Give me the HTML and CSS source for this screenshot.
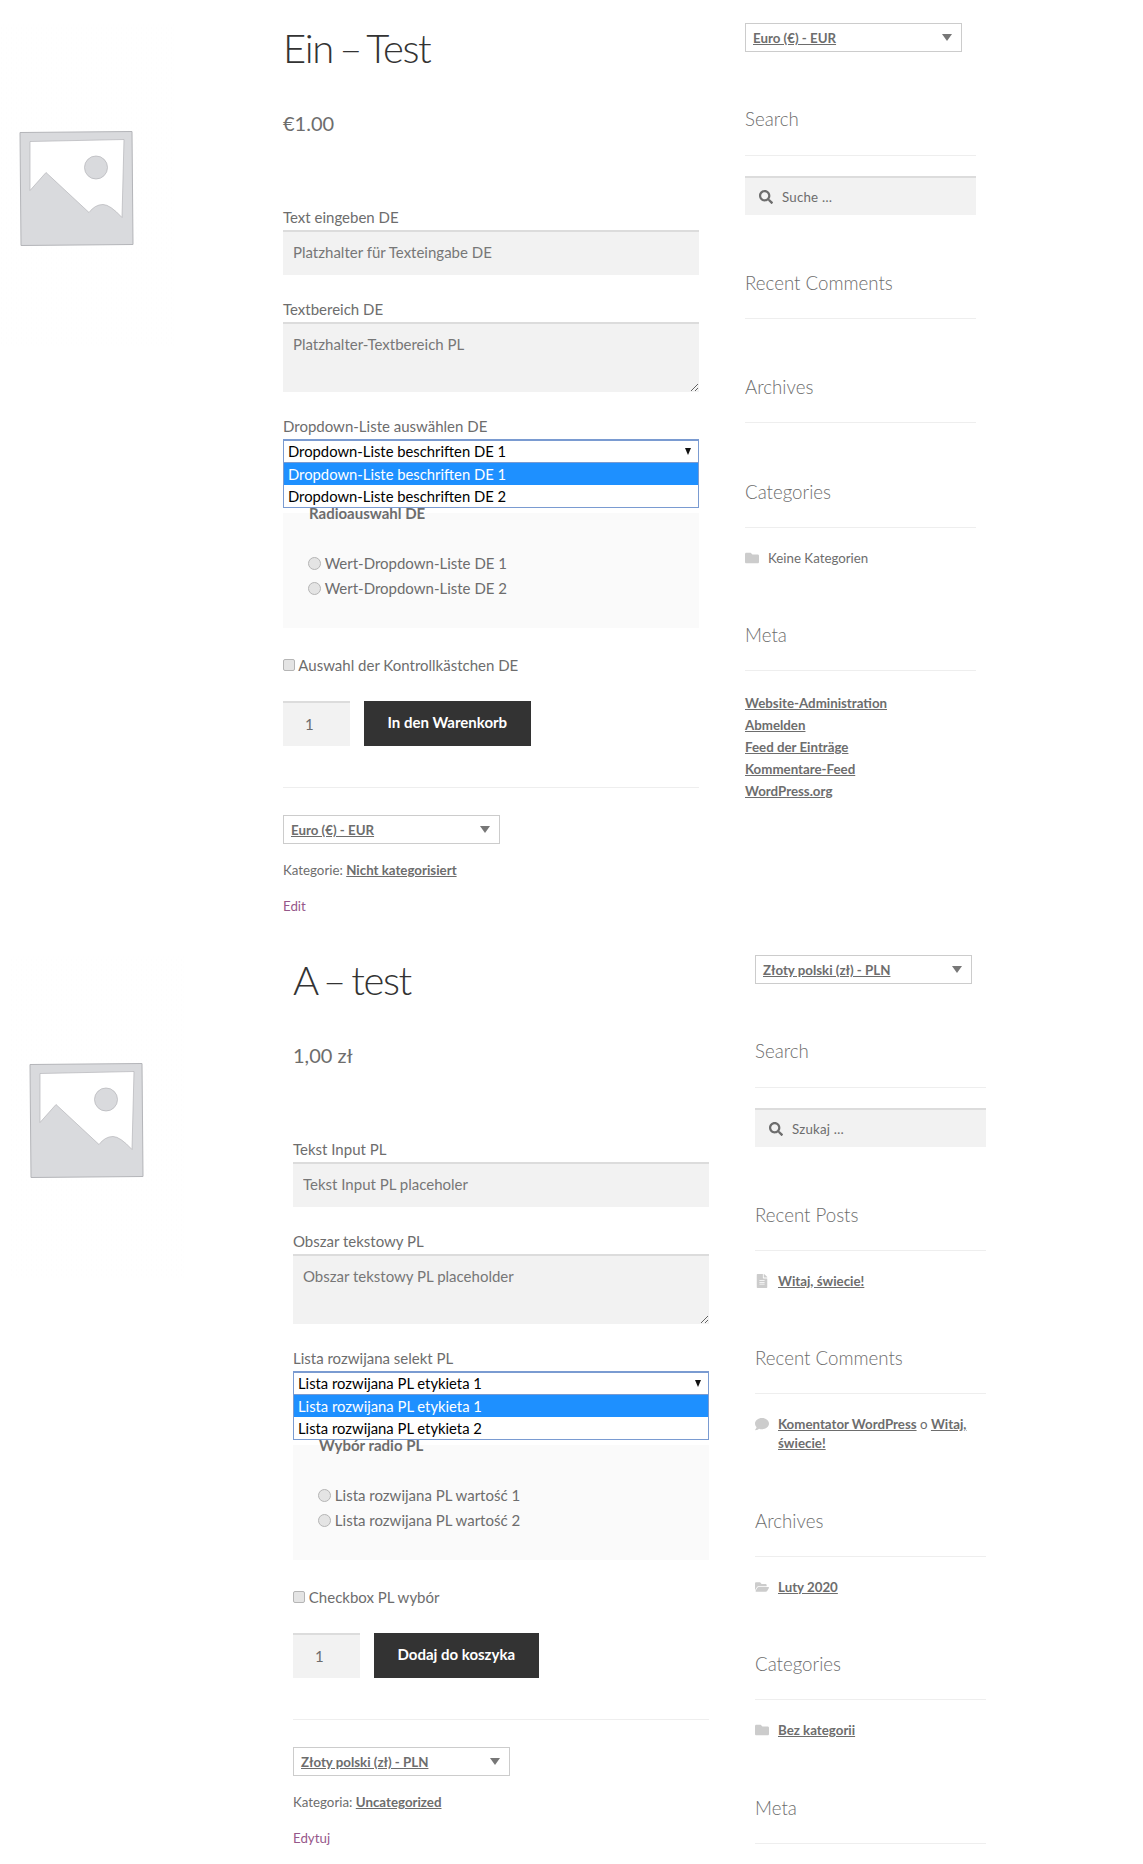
FILE: index.html
```html
<!DOCTYPE html>
<html lang="en">
<head>
    <meta charset="UTF-8">
    <title>Produkt</title>
    <link rel="stylesheet" href="styles.css">
</head>
<body>
    <svg class="sprite" aria-hidden="true">
        <defs>
            <pattern id="dots" width="5" height="5" patternUnits="userSpaceOnUse">
                <rect x="1" y="2" width="1" height="1" fill="#fafafa"/>
                <rect x="3" y="4" width="1" height="1" fill="#fcfcfc"/>
            </pattern>
        </defs>
        <symbol id="ph" viewBox="0 0 175 345">
            <rect x="0" y="24" width="175" height="322" fill="url(#dots)"/>
            <path d="M20 132 L132 131 L133 244 L21 245 Z" fill="#d9dadd" stroke="#b4b5b9"/>
            <path d="M30 141 L124 139 L122 217 Q110 204 103 204 Q95 204 89 212 L46 172 L30 190 Z" fill="#fff" stroke="#b4b5b9" stroke-width="0.7"/>
            <circle cx="96" cy="167" r="11.5" fill="#d9dadd" stroke="#b4b5b9" stroke-width="0.7"/>
        </symbol>
        <symbol id="i-search" viewBox="0 0 512 512"><path d="M505 442.7L405.3 343c-4.5-4.5-10.6-7-17-7H372c27.6-35.3 44-79.7 44-128C416 93.1 322.9 0 208 0S0 93.1 0 208s93.1 208 208 208c48.3 0 92.7-16.4 128-44v16.3c0 6.4 2.5 12.5 7 17l99.7 99.7c9.4 9.4 24.6 9.4 33.9 0l28.3-28.3c9.4-9.4 9.4-24.6.1-34zM208 336c-70.7 0-128-57.2-128-128 0-70.7 57.2-128 128-128 70.7 0 128 57.2 128 128 0 70.7-57.2 128-128 128z"/></symbol>
        <symbol id="i-folder" viewBox="0 0 512 512"><path d="M464 128H272l-64-64H48C21.49 64 0 85.49 0 112v288c0 26.51 21.49 48 48 48h416c26.51 0 48-21.49 48-48V176c0-26.51-21.49-48-48-48z"/></symbol>
        <symbol id="i-open" viewBox="0 0 576 512"><path d="M572.694 292.093L500.27 416.248A63.997 63.997 0 0 1 444.989 448H45.025c-18.523 0-30.064-20.093-20.731-36.093l72.424-124.155A64 64 0 0 1 152 256h399.964c18.523 0 30.064 20.093 20.73 36.093zM152 224h328v-48c0-26.51-21.49-48-48-48H272l-64-64H48C21.49 64 0 85.49 0 112v278.046l69.077-118.418C86.214 242.25 117.989 224 152 224z"/></symbol>
        <symbol id="i-file" viewBox="0 0 384 512"><path d="M224 136V0H24C10.7 0 0 10.7 0 24v464c0 13.3 10.7 24 24 24h336c13.3 0 24-10.7 24-24V160H248c-13.2 0-24-10.8-24-24zm64 236c0 6.6-5.4 12-12 12H108c-6.6 0-12-5.4-12-12v-8c0-6.6 5.4-12 12-12h168c6.6 0 12 5.4 12 12v8zm0-64c0 6.6-5.4 12-12 12H108c-6.6 0-12-5.4-12-12v-8c0-6.6 5.4-12 12-12h168c6.6 0 12 5.4 12 12v8zm0-72v8c0 6.6-5.4 12-12 12H108c-6.6 0-12-5.4-12-12v-8c0-6.6 5.4-12 12-12h168c6.6 0 12 5.4 12 12zm96-114.1v6.1H256V0h6.1c6.4 0 12.5 2.5 17 7l97.9 98c4.5 4.5 7 10.6 7 16.9z"/></symbol>
        <symbol id="i-comment" viewBox="0 0 512 512"><path d="M256 32C114.6 32 0 125.1 0 240c0 49.6 21.4 95 57 130.7C44.5 421.1 2.7 466 2.2 466.5c-2.2 2.3-2.8 5.7-1.5 8.7S4.8 480 8 480c66.3 0 116-31.8 140.6-51.4 32.7 12.3 69 19.4 107.4 19.4 141.4 0 256-93.1 256-208S397.4 32 256 32z"/></symbol>
    </svg>

    <div class="product">
        <svg class="placeholder"><use href="#ph"/></svg>
        <div class="summary">
            <h1 class="product-title">Ein – Test</h1>
            <p class="price">€1.00</p>
            <label class="field-label first">Text eingeben DE</label>
            <input class="text-input" type="text" placeholder="Platzhalter für Texteingabe DE">
            <label class="field-label">Textbereich DE</label>
            <textarea class="text-area" placeholder="Platzhalter-Textbereich PL"></textarea>
            <label class="field-label">Dropdown-Liste auswählen DE</label>
            <div class="open-select">
                <div class="open-select-value"><span>Dropdown-Liste beschriften DE 1</span><i class="mini-arrow"></i></div>
                <div class="open-select-list">
                    <div class="option selected">Dropdown-Liste beschriften DE 1</div>
                    <div class="option">Dropdown-Liste beschriften DE 2</div>
                </div>
            </div>
            <fieldset class="radio-group">
                <legend>Radioauswahl DE</legend>
                <label class="radio-row"><input type="radio" name="r1"> Wert-Dropdown-Liste DE 1</label>
                <label class="radio-row"><input type="radio" name="r1"> Wert-Dropdown-Liste DE 2</label>
            </fieldset>
            <label class="check-row"><input type="checkbox"> Auswahl der Kontrollkästchen DE</label>
            <div class="cart-row">
                <div class="qty">1</div>
                <div class="cart-button">In den Warenkorb</div>
            </div>
            <div class="currency"><a href="#">Euro (€) - EUR</a><i class="arrow"></i></div>
            <p class="meta">Kategorie: <a href="#">Nicht kategorisiert</a></p>
            <p class="edit"><a href="#">Edit</a></p>
        </div>
        <div class="sidebar">
            <div class="currency top"><a href="#">Euro (€) - EUR</a><i class="arrow"></i></div>
            <div class="widget first">
                <h2 class="widget-title">Search</h2>
                <div class="search-box"><svg class="search-icon"><use href="#i-search"/></svg>Suche …</div>
            </div>
            <div class="widget"><h2 class="widget-title">Recent Comments</h2></div>
            <div class="widget"><h2 class="widget-title">Archives</h2></div>
            <div class="widget">
                <h2 class="widget-title">Categories</h2>
                <ul class="widget-list">
                    <li><svg class="list-icon"><use href="#i-folder"/></svg><span>Keine Kategorien</span></li>
                </ul>
            </div>
            <div class="widget">
                <h2 class="widget-title">Meta</h2>
                <ul class="widget-list links">
                    <li><a href="#">Website-Administration</a></li>
                    <li><a href="#">Abmelden</a></li>
                    <li><a href="#">Feed der Einträge</a></li>
                    <li><a href="#">Kommentare-Feed</a></li>
                    <li><a href="#">WordPress.org</a></li>
                </ul>
            </div>
        </div>
    </div>

    <div class="product second">
        <svg class="placeholder"><use href="#ph"/></svg>
        <div class="summary">
            <h1 class="product-title">A – test</h1>
            <p class="price">1,00 zł</p>
            <label class="field-label first">Tekst Input PL</label>
            <input class="text-input" type="text" placeholder="Tekst Input PL placeholer">
            <label class="field-label">Obszar tekstowy PL</label>
            <textarea class="text-area" placeholder="Obszar tekstowy PL placeholder"></textarea>
            <label class="field-label">Lista rozwijana selekt PL</label>
            <div class="open-select">
                <div class="open-select-value"><span>Lista rozwijana PL etykieta 1</span><i class="mini-arrow"></i></div>
                <div class="open-select-list">
                    <div class="option selected">Lista rozwijana PL etykieta 1</div>
                    <div class="option">Lista rozwijana PL etykieta 2</div>
                </div>
            </div>
            <fieldset class="radio-group">
                <legend>Wybór radio PL</legend>
                <label class="radio-row"><input type="radio" name="r2"> Lista rozwijana PL wartość 1</label>
                <label class="radio-row"><input type="radio" name="r2"> Lista rozwijana PL wartość 2</label>
            </fieldset>
            <label class="check-row"><input type="checkbox"> Checkbox PL wybór</label>
            <div class="cart-row">
                <div class="qty">1</div>
                <div class="cart-button">Dodaj do koszyka</div>
            </div>
            <div class="currency"><a href="#">Złoty polski (zł) - PLN</a><i class="arrow"></i></div>
            <p class="meta">Kategoria: <a href="#">Uncategorized</a></p>
            <p class="edit"><a href="#">Edytuj</a></p>
        </div>
        <div class="sidebar">
            <div class="currency top"><a href="#">Złoty polski (zł) - PLN</a><i class="arrow"></i></div>
            <div class="widget first">
                <h2 class="widget-title">Search</h2>
                <div class="search-box"><svg class="search-icon"><use href="#i-search"/></svg>Szukaj …</div>
            </div>
            <div class="widget">
                <h2 class="widget-title">Recent Posts</h2>
                <ul class="widget-list">
                    <li><svg class="list-icon"><use href="#i-file"/></svg><span><a href="#">Witaj, świecie!</a></span></li>
                </ul>
            </div>
            <div class="widget">
                <h2 class="widget-title">Recent Comments</h2>
                <ul class="widget-list">
                    <li><svg class="list-icon"><use href="#i-comment"/></svg><span><a href="#">Komentator WordPress</a> o <a href="#">Witaj, świecie!</a></span></li>
                </ul>
            </div>
            <div class="widget">
                <h2 class="widget-title">Archives</h2>
                <ul class="widget-list">
                    <li><svg class="list-icon"><use href="#i-open"/></svg><span><a href="#">Luty 2020</a></span></li>
                </ul>
            </div>
            <div class="widget">
                <h2 class="widget-title">Categories</h2>
                <ul class="widget-list">
                    <li><svg class="list-icon"><use href="#i-folder"/></svg><span><a href="#">Bez kategorii</a></span></li>
                </ul>
            </div>
            <div class="widget">
                <h2 class="widget-title">Meta</h2>
            </div>
        </div>
    </div>
</body>
</html>
```

FILE: styles.css
```css
body {
    font-family: Lato, "Noto Sans", sans-serif;
    font-size: 15px;
    line-height: 22px;
    color: #6d6d6d;
    margin: 0;
    padding: 0;
    background: #fff;
}
a {
    color: #6d6d6d;
}
.sprite {
    position: absolute;
    width: 0;
    height: 0;
}
.product {
    display: grid;
    grid-template-columns: 283px 416px 231px;
    height: 932px;
    overflow: hidden;
}
.product.second {
    padding-left: 10px;
}
.placeholder {
    width: 175px;
    height: 346px;
    display: block;
}
.summary {
    padding-top: 23px;
}
.product-title {
    font-size: 40px;
    line-height: 50px;
    font-weight: 300;
    letter-spacing: -1.4px;
    word-spacing: -3px;
    color: #333;
    margin: 0;
}
.price {
    font-size: 20px;
    line-height: 30px;
    margin: 35px 0 0;
}
.field-label {
    display: block;
    margin-top: 23px;
}
.field-label.first {
    margin-top: 68px;
}
.text-input,
.text-area {
    display: block;
    width: 100%;
    box-sizing: border-box;
    border: 0;
    border-top: 2px solid #dcdcdc;
    border-radius: 0;
    background: #f2f2f2;
    padding: 0 10px;
    margin-top: 2px;
    font: inherit;
    color: #6d6d6d;
    outline: none;
}
.text-input {
    height: 45px;
    padding-bottom: 4px;
}
.text-area {
    height: 70px;
    margin-top: 2px;
    margin-bottom: 1px;
    padding-top: 9px;
    resize: vertical;
}
.text-input::placeholder,
.text-area::placeholder {
    color: #777;
    opacity: 1;
}
.open-select {
    position: relative;
    height: 24px;
    margin-top: 1.5px;
    color: #000;
    font-size: 14.8px;
}
.open-select-value {
    height: 24px;
    box-sizing: border-box;
    border: 1px solid #7a9bd1;
    border-top-width: 2px;
    padding: 0 4px;
    line-height: 21px;
    display: flex;
    justify-content: space-between;
    align-items: center;
}
.mini-arrow {
    width: 0;
    height: 0;
    border-left: 3.5px solid transparent;
    border-right: 3.5px solid transparent;
    border-top: 7px solid #111;
    margin-right: 3px;
}
.open-select-list {
    position: absolute;
    left: 0;
    right: 0;
    top: 24px;
    z-index: 2;
    background: #fff;
    border: 1px solid #7a9bd1;
    border-top: 0;
}
.option {
    height: 22px;
    line-height: 22px;
    padding: 0 4px;
}
.option.selected {
    background: #1e90ff;
    color: #fff;
}
.radio-group {
    border: 0;
    margin: 39.5px 0 0;
    padding: 27px 26px 27px 25px;
    background: #fafafa;
    min-width: 0;
}
.radio-group legend {
    font-weight: 700;
    padding: 0;
    margin-left: 1px;
}
.radio-row {
    display: block;
    line-height: 25px;
}
.radio-row input,
.check-row input {
    appearance: none;
    box-sizing: border-box;
    margin: 0;
    border: 1px solid #b5b5b5;
    background: #e4e4e4;
}
.radio-row input {
    width: 13px;
    height: 13px;
    border-radius: 50%;
    vertical-align: -1px;
}
.check-row {
    display: block;
    margin-top: 25.5px;
}
.check-row input {
    width: 12px;
    height: 12px;
    border-radius: 2px;
    vertical-align: 0;
}
.cart-row {
    display: flex;
    gap: 14px;
    margin-top: 25.5px;
    padding-bottom: 41px;
    border-bottom: 1px solid #eee;
}
.qty {
    width: 67px;
    height: 45px;
    box-sizing: border-box;
    background: #f2f2f2;
    border-top: 2px solid #dcdcdc;
    padding-left: 22px;
    line-height: 43px;
}
.cart-button {
    height: 45px;
    background: #333;
    color: #fff;
    font-weight: 700;
    line-height: 43px;
    padding: 0 23.5px;
}
.currency {
    width: 217px;
    height: 29px;
    box-sizing: border-box;
    border: 1px solid #ccc;
    margin-top: 27px;
    padding: 0 9px 0 7px;
    display: flex;
    justify-content: space-between;
    align-items: center;
    font-size: 13.3px;
    font-weight: 700;
}
.currency.top {
    margin-top: 23px;
}
.arrow {
    width: 0;
    height: 0;
    border-left: 5.5px solid transparent;
    border-right: 5.5px solid transparent;
    border-top: 7px solid #777;
}
.meta {
    font-size: 13.3px;
    margin: 15px 0 0;
}
.meta a {
    font-weight: 700;
}
.edit {
    font-size: 13.3px;
    margin: 14px 0 0;
}
.edit a {
    color: #96588a;
    text-decoration: none;
}
.sidebar {
    padding-left: 46px;
    width: 185px;
}
.widget {
    margin-top: 55.5px;
}
.widget.first {
    margin-top: 54px;
    margin-bottom: -1px;
}
.widget-title {
    font-size: 18.7px;
    line-height: 26px;
    font-weight: 300;
    margin: 0;
    padding-bottom: 22px;
    border-bottom: 1px solid #eee;
    width: 231px;
}
.widget.first .widget-title {
    padding-bottom: 23px;
}
.search-box {
    width: 231px;
    height: 39px;
    box-sizing: border-box;
    background: #f2f2f2;
    border-top: 2px solid #dcdcdc;
    margin-top: 20px;
    display: flex;
    align-items: center;
    padding-left: 14px;
    font-size: 13.3px;
    letter-spacing: 0.2px;
}
.search-icon {
    width: 14px;
    height: 14px;
    fill: #6d6d6d;
    margin-right: 9px;
}
.widget-list {
    list-style: none;
    margin: 21px 0 -1px;
    padding: 0;
    width: 231px;
    font-size: 13.3px;
    line-height: 19px;
}
.widget-list.links {
    margin-top: 23px;
}
.widget-list li {
    display: flex;
    gap: 9px;
    margin-bottom: 3px;
}
.widget-list a {
    font-weight: 700;
}
.widget-list.links li {
    display: block;
}
.list-icon {
    width: 14px;
    height: 14px;
    fill: #ccc;
    flex: none;
    margin-top: 2px;
}
```
